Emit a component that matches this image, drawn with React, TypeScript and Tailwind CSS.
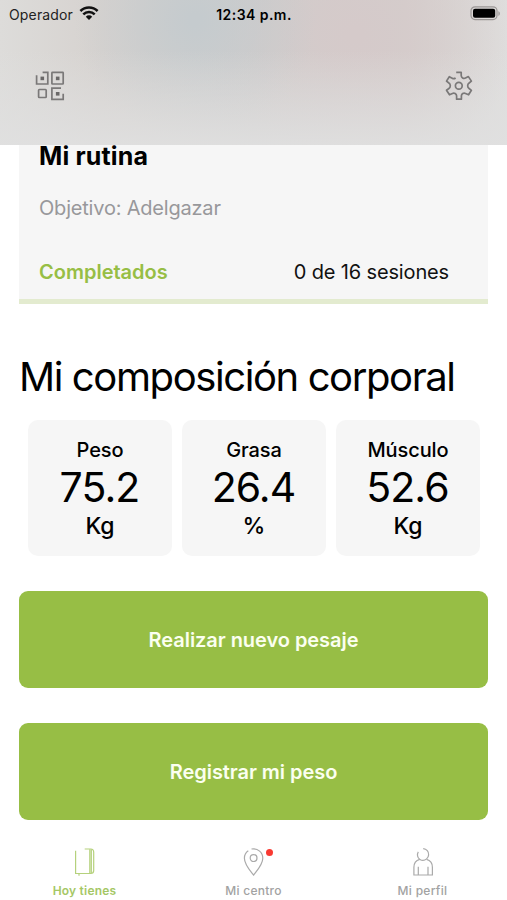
import React from 'react';

interface Metric {
  label: string;
  value: string;
  unit: string;
}

const metrics: Metric[] = [
  { label: 'Peso', value: '75.2', unit: 'Kg' },
  { label: 'Grasa', value: '26.4', unit: '%' },
  { label: 'Músculo', value: '52.6', unit: 'Kg' },
];

function WifiIcon() {
  return (
    <svg width="20" height="16" viewBox="0 0 20 16" fill="none" stroke="#111" strokeWidth="2.5">
      <path d="M1.4 6a12.2 12.2 0 0 1 17.2 0" />
      <path d="M4.3 9.3a8 8 0 0 1 11.4 0" />
      <path d="M10 15l-3.2-3.3a4.5 4.5 0 0 1 6.4 0z" fill="#111" stroke="none" />
    </svg>
  );
}

function BatteryIcon() {
  return (
    <svg width="32" height="15" viewBox="0 0 32 15">
      <rect x="2" y="0.8" width="26" height="12.8" rx="4" fill="none" stroke="#9a9695" strokeWidth="1.2" />
      <rect x="4" y="2.7" width="22.2" height="9" rx="2" fill="#000" />
      <path d="M29.5 5.2c1.6.7 1.6 4 0 4.7z" fill="#8f8b8a" />
    </svg>
  );
}

function QrIcon() {
  return (
    <svg width="30" height="30" viewBox="0 0 30 30" fill="none" stroke="#7a7878" strokeWidth="1.7">
      <path d="M1.6 4.2v8.8h11.2V1.4H7.6" />
      <rect x="16.9" y="1.4" width="11.3" height="11.6" rx="0.5" />
      <rect x="3.6" y="18.5" width="7.6" height="8" rx="0.8" />
      <path d="M26 17.1h-9.100v11.3h11.3v-5.6" />
      <g fill="#6a6868" stroke="none">
        <rect x="5.5" y="5.6" width="3.6" height="3.6" />
        <rect x="20.9" y="5.6" width="3.6" height="3.6" />
        <rect x="20.9" y="21" width="3.6" height="3.6" />
      </g>
    </svg>
  );
}

function GearIcon() {
  return (
    <svg width="30" height="30" viewBox="0 0 30 30" fill="none" stroke="#7a7878" strokeWidth="1.7" strokeLinejoin="round">
      <circle cx="14.8" cy="14.8" r="3.4" />
      <path d="M12.2 1.4h5v3.1c0 2.1 2.3 3.6 4.3 2.6l2.9-1.5 3 4.5-2.3 1.9c-1.9 1.3-1.9 4.2 0 5.5l2.3 1.8-2.8 4.5-3.1-1.4c-2-.9-4 .5-4.1 2.5v3.3h-4.8v-3.3c-.1-2-2.3-3.4-4.2-2.500l-2.9 1.400-3-4.500 2.400-1.800c1.900-1.300 1.900-4.200 0-5.500L2.500 10.100l2.800-4.400 2.900 1.500c1 .6 2.300.6 3.400-.2" />
    </svg>
  );
}

function NotebookIcon() {
  return (
    <svg width="24" height="30" viewBox="0 0 24 30" fill="none" stroke="#b5d17c" strokeWidth="1.2">
      <path d="M2.6 3.7v22.8h15.2c1.6 0 2.9-1.3 2.9-2.9V5.2c0-2-1-3.2-2.9-3.2h-6.100" />
      <path d="M16.8 2.2v24.3M18.3 2.2v24.1M6 26.5v2.2" />
    </svg>
  );
}

function PinIcon() {
  return (
    <svg width="24" height="30" viewBox="0 0 24 30" fill="none" stroke="#aaa" strokeWidth="1.2">
      <path d="M9.5 2c6.5-1 11.3 3.500 11.300 9.200 0 6.200-5.700 12.300-9.200 16.900C8 23.500 2.400 17.400 2.400 11.200c0-3.200 1.500-5.900 3.900-7.500" />
      <circle cx="11.6" cy="11.1" r="3.4" />
    </svg>
  );
}

function PersonIcon() {
  return (
    <svg width="24" height="30" viewBox="0 0 24 30" fill="none" stroke="#aaa" strokeWidth="1.2">
      <path d="M7.3 4.9c-1.6 2.7-.8 6 1.6 7.5 2.1 1.3 4.8 1.1 6.7-.5 2.5-2.1 2.7-5.800.7-8.200-1.100-1.300-2.500-1.900-4.100-2" />
      <path d="M8.7 12.4c-3.4 1-5.8 4.2-5.8 7.900v7.700h18.500v-7.700c0-3.700-2.400-6.900-5.800-7.900" />
      <path d="M7.3 19.7v8.3M17 19.7v8.3" />
    </svg>
  );
}

function Header() {
  return (
    <header className="h-[145px] shrink-0 bg-[#d4d1cf] bg-[linear-gradient(to_bottom,transparent_35%,rgba(224,224,224,0.9)_100%),radial-gradient(ellipse_120px_120px_at_195px_20px,#c5cbce_5%,rgba(197,203,206,0.5)_50%,rgba(197,203,206,0)_100%),radial-gradient(ellipse_160px_150px_at_355px_35px,#d5caca_5%,rgba(213,202,202,0.5)_50%,rgba(213,202,202,0)_100%),linear-gradient(to_right,#dddcda_0%,#d6d2cf_20%,#cecccb_50%,#d5cfcd_80%,#dfdedd_100%)]">
      <div className="grid h-7 grid-cols-3 items-center pr-[6px] pl-[9px] text-[14px] text-[#222]">
        <div className="flex items-center gap-[6px]">
          <span className="tracking-[0.15px]">Operador</span>
          <div className="-mt-[2px]">
            <WifiIcon />
          </div>
        </div>
        <span className="-ml-[2px] text-center font-semibold tracking-[0.45px] whitespace-nowrap text-black">12:34 p.m.</span>
        <div className="-mt-[2px] flex justify-end">
          <BatteryIcon />
        </div>
      </div>
      <div className="flex justify-between pt-[43px] pr-[33px] pl-[35px]">
        <button aria-label="QR">
          <QrIcon />
        </button>
        <button aria-label="Ajustes">
          <GearIcon />
        </button>
      </div>
    </header>
  );
}

function RoutineCard() {
  return (
    <section className="mx-[19px] h-[159px] shrink-0 border-b-[5px] border-[#e3ebcf] bg-[#f6f6f6] pr-[39px] pl-5">
      <h2 className="pt-px text-[25px] leading-5 font-bold tracking-[0.15px]">Mi rutina</h2>
      <p className="mt-[28px] text-[20px] leading-7 tracking-[-0.2px] text-[#98989b]">Objetivo: Adelgazar</p>
      <div className="mt-9 flex justify-between text-[20px] leading-7">
        <span className="font-semibold text-[#97be45]">Completados</span>
        <span className="tracking-[-0.15px] text-[#111]">0 de 16 sesiones</span>
      </div>
    </section>
  );
}

function MetricCard({ label, value, unit }: Metric) {
  return (
    <div className="flex h-[136px] flex-1 flex-col items-center rounded-[10px] bg-[#f6f6f6] pt-4">
      <span className="text-[20px] leading-7 font-medium tracking-[-0.1px]">{label}</span>
      <span className="-ml-px text-[41px] leading-[46px] tracking-[-0.9px]">{value}</span>
      <span className="text-[23px] leading-8 font-medium">{unit}</span>
    </div>
  );
}

function TabBar() {
  return (
    <nav className="mt-auto grid h-[53px] grid-cols-3 text-center text-[12px] font-medium text-[#a2a2a2]">
      <a className="flex flex-col items-center gap-[6px] text-[#a5c765]">
        <NotebookIcon />
        <span className="leading-4 font-semibold tracking-[0.2px]">Hoy tienes</span>
      </a>
      <a className="flex flex-col items-center gap-[6px]">
        <div className="relative">
          <PinIcon />
          <span className="absolute top-[2px] -right-[7px] size-[7px] rounded-full bg-[#f93a32]" />
        </div>
        <span className="leading-4 tracking-[0.25px]">Mi centro</span>
      </a>
      <a className="flex flex-col items-center gap-[6px]">
        <PersonIcon />
        <span className="leading-4 tracking-[0.3px]">Mi perfil</span>
      </a>
    </nav>
  );
}

export default function App() {
  return (
    <div className="flex h-[900px] w-[507px] flex-col overflow-hidden bg-white font-['Inter',sans-serif] text-black">
      <Header />
      <RoutineCard />
      <main className="px-[19px]">
        <h1 className="mt-[48px] text-[40px] leading-[50px] tracking-[-1.4px] whitespace-nowrap">Mi composición corporal</h1>
        <div className="mt-[18px] flex gap-[10px] pr-2 pl-[9px]">
          {metrics.map((m) => (
            <MetricCard key={m.label} {...m} />
          ))}
        </div>
        <div className="mt-[35px] flex flex-col gap-[35px] text-[20px] font-semibold tracking-[-0.05px] text-[#fbfff0]">
          <button className="h-[97px] rounded-[9px] bg-[#97be45]">Realizar nuevo pesaje</button>
          <button className="h-[97px] rounded-[9px] bg-[#97be45]">Registrar mi peso</button>
        </div>
      </main>
      <TabBar />
    </div>
  );
}
